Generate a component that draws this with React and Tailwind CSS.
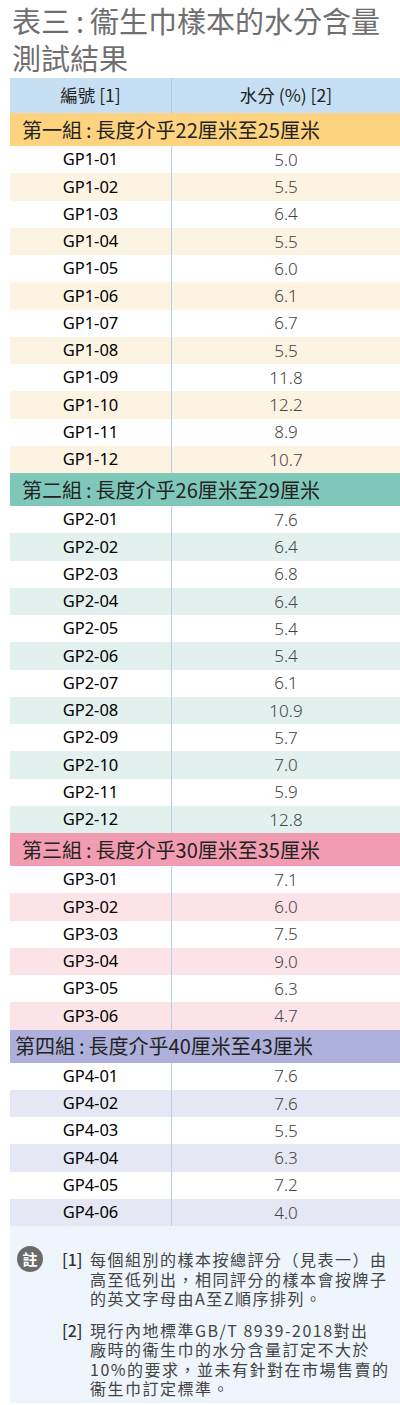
const groups = [
  {
    title: ['第一組', '長度介乎22厘米至25厘米'],
    head: 'bg-[#fdd37f]',
    alt: 'bg-[#fdf3e2]',
    pad: 'pl-[12px]',
    rows: [
      ['GP1-01', '5.0'], ['GP1-02', '5.5'], ['GP1-03', '6.4'], ['GP1-04', '5.5'],
      ['GP1-05', '6.0'], ['GP1-06', '6.1'], ['GP1-07', '6.7'], ['GP1-08', '5.5'],
      ['GP1-09', '11.8'], ['GP1-10', '12.2'], ['GP1-11', '8.9'], ['GP1-12', '10.7'],
    ],
  },
  {
    title: ['第二組', '長度介乎26厘米至29厘米'],
    head: 'bg-[#7fc8b9]',
    alt: 'bg-[#e2f1ed]',
    pad: 'pl-[12px]',
    rows: [
      ['GP2-01', '7.6'], ['GP2-02', '6.4'], ['GP2-03', '6.8'], ['GP2-04', '6.4'],
      ['GP2-05', '5.4'], ['GP2-06', '5.4'], ['GP2-07', '6.1'], ['GP2-08', '10.9'],
      ['GP2-09', '5.7'], ['GP2-10', '7.0'], ['GP2-11', '5.9'], ['GP2-12', '12.8'],
    ],
  },
  {
    title: ['第三組', '長度介乎30厘米至35厘米'],
    head: 'bg-[#f29cb1]',
    alt: 'bg-[#fce3e8]',
    pad: 'pl-[12px]',
    rows: [
      ['GP3-01', '7.1'], ['GP3-02', '6.0'], ['GP3-03', '7.5'],
      ['GP3-04', '9.0'], ['GP3-05', '6.3'], ['GP3-06', '4.7'],
    ],
  },
  {
    title: ['第四組', '長度介乎40厘米至43厘米'],
    head: 'bg-[#adb0da]',
    alt: 'bg-[#e6e7f4]',
    pad: 'pl-[5px]',
    rows: [
      ['GP4-01', '7.6'], ['GP4-02', '7.6'], ['GP4-03', '5.5'],
      ['GP4-04', '6.3'], ['GP4-05', '7.2'], ['GP4-06', '4.0'],
    ],
  },
]

const font = { fontFamily: '"Noto Sans CJK TC", "Noto Sans", sans-serif' }
const latin = { fontFamily: '"Noto Sans", "Noto Sans CJK TC", sans-serif' }

function Note({ label, lines }) {
  return (
    <div className="flex">
      <span className="w-[28px] shrink-0 font-medium text-[#333]">{label}</span>
      <div>
        {lines.map((l) => (
          <div key={l} className="tracking-[1.5px]">{l}</div>
        ))}
      </div>
    </div>
  )
}

export default function App() {
  return (
    <div className="w-[400px] h-[1405px] bg-white" style={font}>
      <h1 className="pl-[12px] pt-[2px] h-[78px] text-[29px] leading-[37px] font-normal text-[#6f6f6f]">
        <div>
          表三<span className="mx-[6px]">:</span>衞生巾樣本的水分含量
        </div>
        <div>測試結果</div>
      </h1>

      <div className="ml-[10px]">
        <div className="flex h-[35px] bg-[#c6dff3] text-[17.5px] text-[#222]">
          <div className="w-[161px] flex items-center justify-center">編號 [1]</div>
          <div className="flex-1 flex items-center justify-center border-l border-[#a9c8e4]">水分 (%) [2]</div>
        </div>

        {groups.map((g) => (
          <div key={g.title[1]}>
            <div className={`h-[33px] flex items-center ${g.pad} ${g.head} text-[20px] text-[#222]`}>
              {g.title[0]}
              <span className="mx-[4px]">:</span>
              {g.title[1]}
            </div>
            {g.rows.map(([code, val], i) => (
              <div key={code} className={`flex h-[27.25px] ${i % 2 ? g.alt : 'bg-white'}`}>
                <div
                  className="w-[161px] flex items-center justify-center text-[16.5px] font-normal text-black"
                  style={latin}
                >
                  {code}
                </div>
                <div
                  className="flex-1 flex items-center justify-center border-l border-[#b5cfe8] text-[17px] font-light text-[#444]"
                  style={latin}
                >
                  {val}
                </div>
              </div>
            ))}
          </div>
        ))}

        <div className="h-[177px] bg-[#eef5fc] flex pt-[20px] text-[16px] leading-[19.5px] text-[#444]">
          <div className="w-[52px] pl-[7px] shrink-0">
            <div className="w-[26px] h-[26px] rounded-full bg-[#6b6b6b] text-white text-[15px] font-bold flex items-center justify-center">
              註
            </div>
          </div>
          <div className="flex flex-col gap-[12px] pt-[4px]">
            <Note
              label="[1]"
              lines={['每個組別的樣本按總評分（見表一）由', '高至低列出，相同評分的樣本會按牌子', '的英文字母由A至Z順序排列。']}
            />
            <Note
              label="[2]"
              lines={['現行內地標準GB/T 8939-2018對出', '廠時的衞生巾的水分含量訂定不大於', '10%的要求，並未有針對在市場售賣的', '衞生巾訂定標準。']}
            />
          </div>
        </div>
      </div>
    </div>
  )
}
